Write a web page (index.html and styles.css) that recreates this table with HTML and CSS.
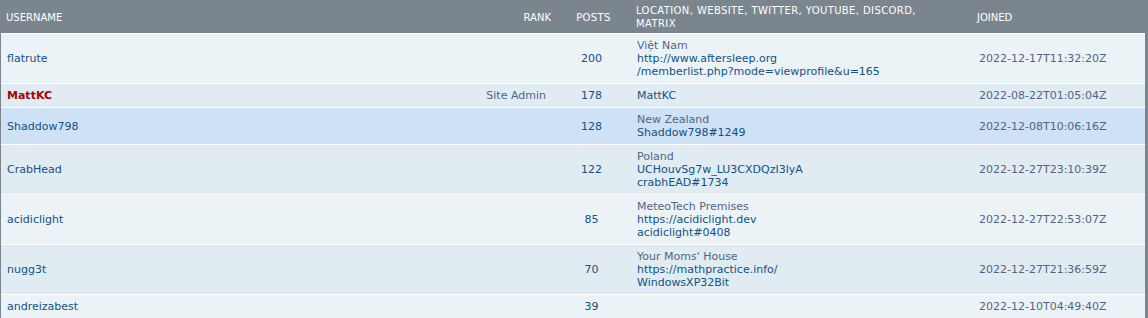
FILE: index.html
```html
<!DOCTYPE html>
<html lang="en">
  <head>
    <meta charset="UTF-8" />
    <title>Memberlist</title>
    <link rel="stylesheet" href="styles.css">
  </head>
  <body>
    <div class="panel">
      <table class="members">
        <colgroup>
          <col class="c-name" />
          <col class="c-rank" />
          <col class="c-posts" />
          <col class="c-info" />
          <col class="c-joined" />
        </colgroup>
        <thead>
          <tr>
            <th class="name">Username</th>
            <th class="rank">Rank</th>
            <th class="posts">Posts</th>
            <th class="info">Location, Website, Twitter, YouTube, Discord,<br>Matrix</th>
            <th class="joined">Joined</th>
          </tr>
        </thead>
        <tbody>
          <tr class="bg1">
            <td class="name"><a href="#">flatrute</a></td>
            <td class="rank"></td>
            <td class="posts"><a href="#">200</a></td>
            <td class="info">Việt Nam<br><a href="#">http://www.aftersleep.org<br>/memberlist.php?mode=viewprofile&amp;u=165</a></td>
            <td class="joined">2022-12-17T11:32:20Z</td>
          </tr>
          <tr class="bg2">
            <td class="name"><a href="#" class="admin">MattKC</a></td>
            <td class="rank">Site Admin</td>
            <td class="posts"><a href="#">178</a></td>
            <td class="info"><a href="#">MattKC</a></td>
            <td class="joined">2022-08-22T01:05:04Z</td>
          </tr>
          <tr class="bg3">
            <td class="name"><a href="#">Shaddow798</a></td>
            <td class="rank"></td>
            <td class="posts"><a href="#">128</a></td>
            <td class="info">New Zealand<br><a href="#">Shaddow798#1249</a></td>
            <td class="joined">2022-12-08T10:06:16Z</td>
          </tr>
          <tr class="bg2">
            <td class="name"><a href="#">CrabHead</a></td>
            <td class="rank"></td>
            <td class="posts"><a href="#">122</a></td>
            <td class="info">Poland<br><a href="#">UCHouvSg7w_LU3CXDQzI3lyA</a><br><a href="#">crabhEAD#1734</a></td>
            <td class="joined">2022-12-27T23:10:39Z</td>
          </tr>
          <tr class="bg1">
            <td class="name"><a href="#">acidiclight</a></td>
            <td class="rank"></td>
            <td class="posts"><a href="#">85</a></td>
            <td class="info">MeteoTech Premises<br><a href="#">https://acidiclight.dev</a><br><a href="#">acidiclight#0408</a></td>
            <td class="joined">2022-12-27T22:53:07Z</td>
          </tr>
          <tr class="bg2">
            <td class="name"><a href="#">nugg3t</a></td>
            <td class="rank"></td>
            <td class="posts"><a href="#">70</a></td>
            <td class="info">Your Moms' House<br><a href="#">https://mathpractice.info/</a><br><a href="#">WindowsXP32Bit</a></td>
            <td class="joined">2022-12-27T21:36:59Z</td>
          </tr>
          <tr class="bg1">
            <td class="name"><a href="#">andreizabest</a></td>
            <td class="rank"></td>
            <td class="posts"><a href="#">39</a></td>
            <td class="info"></td>
            <td class="joined">2022-12-10T04:49:40Z</td>
          </tr>
        </tbody>
      </table>
    </div>
  </body>
</html>
```

FILE: styles.css
```css
body {
  margin: 0;
  font-family: "DejaVu Sans", Verdana, sans-serif;
  font-size: 10px;
  color: #536482;
  background-color: #ecf3f7;
}
a {
  color: #105289;
  text-decoration: none;
}
.panel {
  background-color: #7b858e;
  padding: 0 3px 0 1px;
  height: 318px;
  overflow: hidden;
}
.members {
  width: 1144px;
  border-collapse: collapse;
  table-layout: fixed;
}
.c-name {
  width: 454px;
}
.c-rank {
  width: 100px;
}
.c-posts {
  width: 76px;
}
.c-info {
  width: 342px;
}
.c-joined {
  width: 172px;
}
.members th {
  color: #fff;
  font-weight: normal;
  text-transform: uppercase;
  text-align: left;
  line-height: 13px;
  padding: 4px 4px 3px 5px;
  height: 26px;
  vertical-align: middle;
}
.members th.posts,
.members th.info {
  letter-spacing: 0.4px;
}
.members td {
  font-size: 11px;
  line-height: 13px;
  padding: 5px 5px 5px 6px;
  border-top: 1px solid #fff;
  vertical-align: middle;
}
.members th.rank,
.members td.rank {
  text-align: right;
}
.members td.rank {
  padding-right: 9px;
}
.members th.posts,
.members td.posts {
  text-align: center;
}
.members td.posts {
  padding-right: 9px;
}
.members th.joined {
  padding-left: 4px;
}
.members td.joined {
  padding-left: 6px;
}
.bg1 {
  background-color: #ecf3f7;
}
.bg2 {
  background-color: #e1ebf2;
}
.bg3 {
  background-color: #cfe1f5;
}
.admin {
  color: #aa0000;
  font-weight: bold;
}
```
